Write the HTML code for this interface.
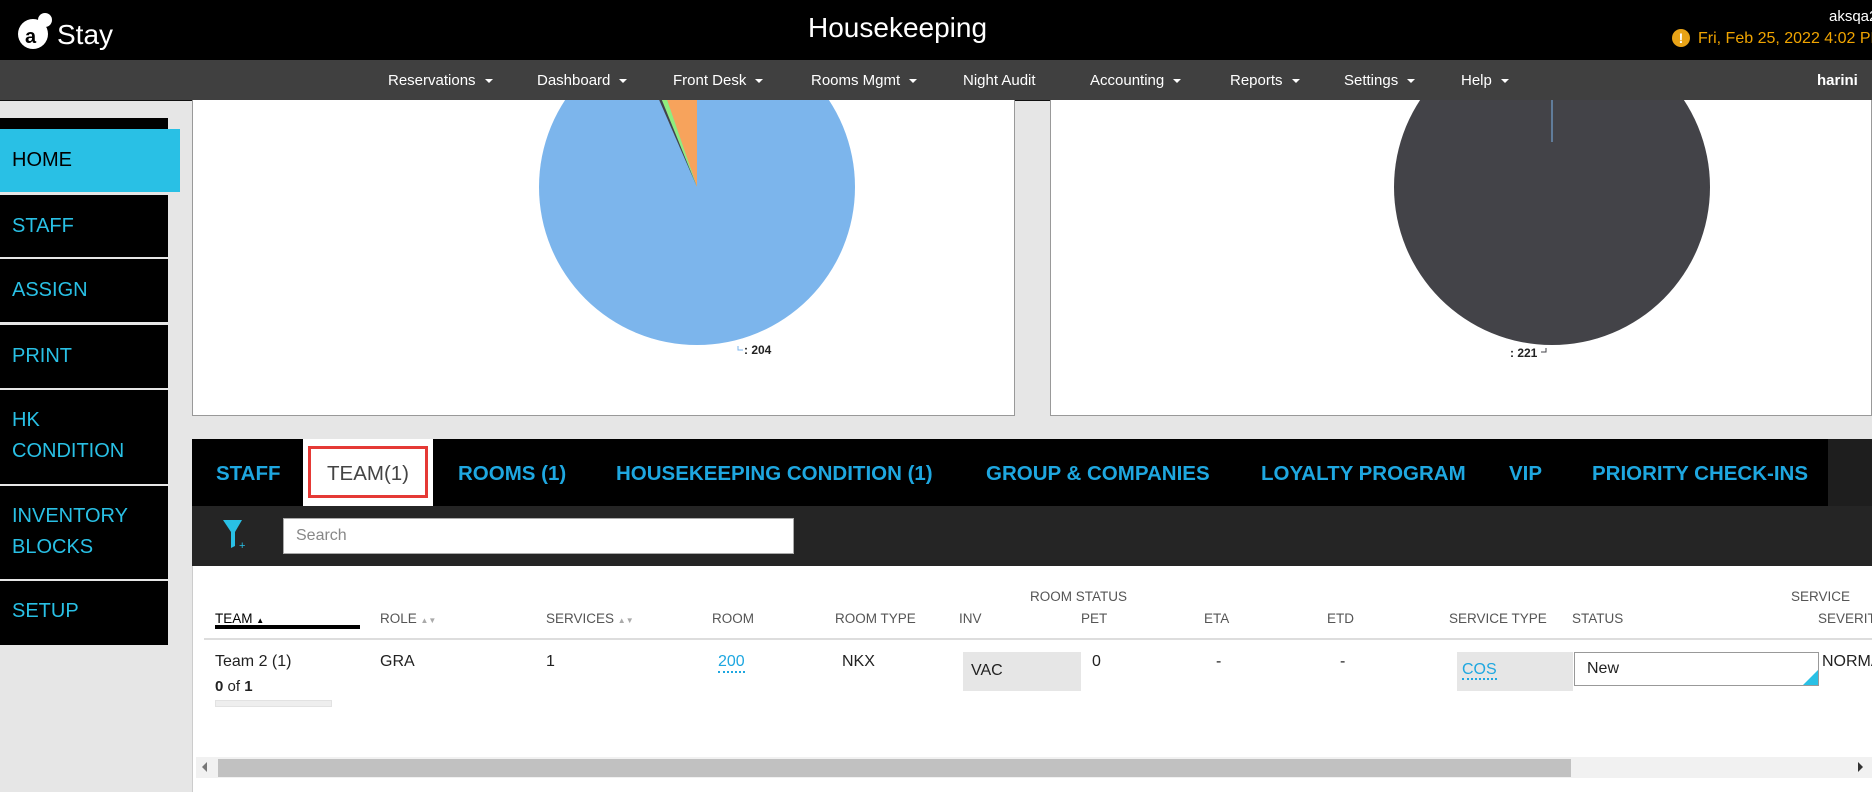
<!DOCTYPE html>
<html><head><meta charset="utf-8"><style>
*{margin:0;padding:0;box-sizing:border-box}
body{width:1872px;height:792px;overflow:hidden;background:#e6e6e6;font-family:"Liberation Sans",sans-serif;position:relative}
.a{position:absolute;white-space:nowrap}
#hdr{left:0;top:0;width:1872px;height:60px;background:#000}
#nav{left:0;top:60px;width:1872px;height:41px;background:#404040;border-bottom:1px solid #111}
.nv{color:#fff;font-size:15px;top:72px}
.car{display:inline-block;width:0;height:0;border-left:4px solid transparent;border-right:4px solid transparent;border-top:4px solid #fff;margin-left:9px;vertical-align:middle}
.sb{left:0;width:168px;background:#000;color:#29c0e5;font-size:20px;padding-left:12px}
.tab{color:#1ea7e0;font-size:20.5px;font-weight:bold;top:462px}
.th{color:#555;font-size:13.5px;top:611px}
.td{color:#222;font-size:16px;top:653px}
</style></head><body>
<div class="a" id="hdr"></div>
<svg class="a" style="left:16px;top:10px" width="40" height="46"><circle cx="17" cy="24" r="15" fill="#fff"/><circle cx="29" cy="10" r="7" fill="#fff"/><text x="9" y="33" font-size="20" font-weight="bold" fill="#000" font-family="Liberation Sans">a</text></svg>
<div class="a" style="left:57px;top:19px;color:#fff;font-size:28px">Stay</div>
<div class="a" style="left:808px;top:12px;color:#fff;font-size:28px">Housekeeping</div>
<div class="a" style="left:1829px;top:8px;color:#fff;font-size:15px">aksqa2</div>
<div class="a" style="left:1672px;top:29px;width:18px;height:18px;border-radius:50%;background:#e8a317;color:#fff;font-size:14px;font-weight:bold;text-align:center;line-height:18px">!</div>
<div class="a" style="left:1698px;top:30px;color:#f0a400;font-size:16px">Fri, Feb 25, 2022 4:02 PM</div>
<div class="a" id="nav"></div>
<div class="a nv" style="left:388px">Reservations<span class="car"></span></div>
<div class="a nv" style="left:537px">Dashboard<span class="car"></span></div>
<div class="a nv" style="left:673px">Front Desk<span class="car"></span></div>
<div class="a nv" style="left:811px">Rooms Mgmt<span class="car"></span></div>
<div class="a nv" style="left:963px">Night Audit</div>
<div class="a nv" style="left:1090px">Accounting<span class="car"></span></div>
<div class="a nv" style="left:1230px">Reports<span class="car"></span></div>
<div class="a nv" style="left:1344px">Settings<span class="car"></span></div>
<div class="a nv" style="left:1461px">Help<span class="car"></span></div>
<div class="a nv" style="left:1817px;font-weight:bold">harini</div>

<div class="a sb" style="top:118px;height:11px"></div>
<div class="a sb" style="top:129px;height:63px;width:180px;background:#29c0e5;color:#000;line-height:63px">HOME</div>
<div class="a sb" style="top:195px;height:62px;line-height:62px">STAFF</div>
<div class="a sb" style="top:259px;height:63px;line-height:63px">ASSIGN</div>
<div class="a sb" style="top:325px;height:63px;line-height:63px">PRINT</div>
<div class="a sb" style="top:390px;height:94px;line-height:31px;padding-top:15px">HK<br>CONDITION</div>
<div class="a sb" style="top:486px;height:93px;line-height:31px;padding-top:15px">INVENTORY<br>BLOCKS</div>
<div class="a sb" style="top:581px;height:64px;line-height:60px">SETUP</div>

<div class="a" style="left:192px;top:100px;width:823px;height:316px;background:#fff;border:1px solid #999;border-top:none;overflow:hidden">
<svg width="823" height="316" style="position:absolute;left:0;top:0">
<g transform="translate(504,87)">
<circle r="158" fill="#7cb5ec"/>
<path d="M0 0 L0 -158 A158 158 0 0 0 -51.4 -149.4 Z" fill="#f7a35c"/>
<path d="M0 0 L-51.4 -149.4 A158 158 0 0 0 -59.2 -146.5 Z" fill="#90ed7d"/>
<path d="M0 0 L-59.2 -146.5 A158 158 0 0 0 -63 -144.9 Z" fill="#434348"/>
</g>
<path d="M545 246 l0 4 l5 0" stroke="#7cb5ec" fill="none"/>
<text x="551" y="254" font-size="12" font-weight="bold" fill="#222" font-family="Liberation Sans">: 204</text>
</svg></div>
<div class="a" style="left:1050px;top:100px;width:822px;height:316px;background:#fff;border:1px solid #999;border-top:none;overflow:hidden">
<svg width="822" height="316" style="position:absolute;left:0;top:0">
<g transform="translate(501,87)"><circle r="158" fill="#434348"/><line x1="0" y1="-45" x2="0" y2="-158" stroke="#7cb5ec" stroke-width="1"/></g>
<path d="M495 248 l0 4 l-5 0" stroke="#434348" fill="none"/>
<text x="459" y="257" font-size="12" font-weight="bold" fill="#222" font-family="Liberation Sans">: 221</text>
</svg></div>

<div class="a" style="left:192px;top:439px;width:1680px;height:67px;background:#1e1e1e"></div>
<div class="a" style="left:192px;top:439px;width:1636px;height:67px;background:#000"></div>
<div class="a" style="left:303px;top:439px;width:130px;height:67px;background:#fff"></div>
<div class="a" style="left:308px;top:446px;width:120px;height:52px;border:3px solid #e53935"></div>
<div class="a tab" style="left:216px">STAFF</div>
<div class="a tab" style="left:327px;color:#444;font-weight:normal">TEAM(1)</div>
<div class="a tab" style="left:458px">ROOMS (1)</div>
<div class="a tab" style="left:616px">HOUSEKEEPING CONDITION (1)</div>
<div class="a tab" style="left:986px">GROUP &amp; COMPANIES</div>
<div class="a tab" style="left:1261px">LOYALTY PROGRAM</div>
<div class="a tab" style="left:1509px">VIP</div>
<div class="a tab" style="left:1592px">PRIORITY CHECK-INS</div>
<div class="a" style="left:192px;top:506px;width:1680px;height:60px;background:#252525"></div>
<svg class="a" style="left:222px;top:518px" width="28" height="34"><path d="M1 2 H20 L13 14 V28 L9 30 V14 Z" fill="#29c0e5"/><text x="17" y="31" font-size="11" fill="#29c0e5" font-family="Liberation Sans">+</text></svg>
<div class="a" style="left:283px;top:518px;width:511px;height:36px;background:#fff;border:1px solid #aaa;color:#888;font-size:16px;padding:8px 12px">Search</div>

<div class="a" style="left:192px;top:566px;width:1680px;height:226px;background:#fff;border-left:1px solid #ccc"></div>
<div class="a th" style="left:1030px;top:589px">ROOM STATUS</div>
<div class="a th" style="left:1791px;top:589px">SERVICE</div>
<div class="a th" style="left:215px;color:#000">TEAM <span style="font-size:8px">▲</span></div>
<div class="a" style="left:215px;top:625px;width:145px;height:4px;background:#000"></div>
<div class="a th" style="left:380px">ROLE <span style="font-size:8px;color:#aaa">▲▼</span></div>
<div class="a th" style="left:546px">SERVICES <span style="font-size:8px;color:#aaa">▲▼</span></div>
<div class="a th" style="left:712px">ROOM</div>
<div class="a th" style="left:835px">ROOM TYPE</div>
<div class="a th" style="left:959px">INV</div>
<div class="a th" style="left:1081px">PET</div>
<div class="a th" style="left:1204px">ETA</div>
<div class="a th" style="left:1327px">ETD</div>
<div class="a th" style="left:1449px">SERVICE TYPE</div>
<div class="a th" style="left:1572px">STATUS</div>
<div class="a th" style="left:1818px">SEVERITY</div>
<div class="a" style="left:204px;top:638px;width:1668px;height:2px;background:#ddd"></div>
<div class="a td" style="left:215px">Team 2 (1)</div>
<div class="a td" style="left:215px;top:678px;font-size:15px"><b>0</b> of <b>1</b></div>
<div class="a" style="left:215px;top:700px;width:117px;height:7px;background:#eee;border:1px solid #e2e2e2"></div>
<div class="a td" style="left:380px">GRA</div>
<div class="a td" style="left:546px">1</div>
<div class="a td" style="left:718px;color:#1ea7e0;border-bottom:2px dotted #1ea7e0">200</div>
<div class="a td" style="left:842px">NKX</div>
<div class="a" style="left:963px;top:652px;width:118px;height:39px;background:#e6e6e6;font-size:16px;color:#222;padding:10px 8px">VAC</div>
<div class="a td" style="left:1092px">0</div>
<div class="a td" style="left:1216px">-</div>
<div class="a td" style="left:1340px">-</div>
<div class="a" style="left:1457px;top:652px;width:116px;height:39px;background:#e6e6e6;font-size:16px;color:#1ea7e0;padding:9px 5px"><span style="border-bottom:2px dotted #1ea7e0">COS</span></div>
<div class="a" style="left:1574px;top:652px;width:245px;height:34px;border:1px solid #999;background:#fff;font-size:16px;color:#222;padding:7px 12px">New</div>
<div class="a" style="left:1803px;top:670px;width:0;height:0;border-left:15px solid transparent;border-bottom:15px solid #29c0e5"></div>
<div class="a td" style="left:1822px">NORMAL</div>

<div class="a" style="left:196px;top:757px;width:1676px;height:21px;background:#f1f1f1"></div>
<div class="a" style="left:218px;top:759px;width:1353px;height:18px;background:#c1c1c1"></div>
<div class="a" style="left:202px;top:762px;width:0;height:0;border-top:5px solid transparent;border-bottom:5px solid transparent;border-right:5px solid #777"></div>
<div class="a" style="left:1858px;top:762px;width:0;height:0;border-top:5px solid transparent;border-bottom:5px solid transparent;border-left:5px solid #333"></div>
</body></html>
